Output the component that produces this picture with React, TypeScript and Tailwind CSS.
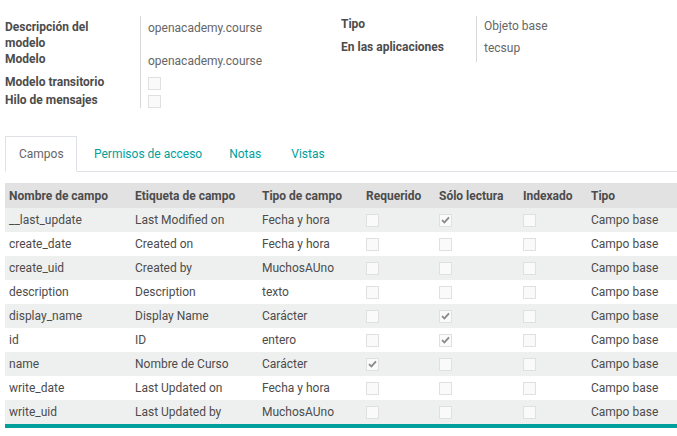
import React from 'react';

type Row = {
  name: string;
  label: string;
  type: string;
  required: boolean;
  readonly: boolean;
};

const ROWS: Row[] = [
  { name: '__last_update', label: 'Last Modified on', type: 'Fecha y hora', required: false, readonly: true },
  { name: 'create_date', label: 'Created on', type: 'Fecha y hora', required: false, readonly: false },
  { name: 'create_uid', label: 'Created by', type: 'MuchosAUno', required: false, readonly: false },
  { name: 'description', label: 'Description', type: 'texto', required: false, readonly: false },
  { name: 'display_name', label: 'Display Name', type: 'Carácter', required: false, readonly: true },
  { name: 'id', label: 'ID', type: 'entero', required: false, readonly: true },
  { name: 'name', label: 'Nombre de Curso', type: 'Carácter', required: true, readonly: false },
  { name: 'write_date', label: 'Last Updated on', type: 'Fecha y hora', required: false, readonly: false },
  { name: 'write_uid', label: 'Last Updated by', type: 'MuchosAUno', required: false, readonly: false },
];

function Check({ checked = false }: { checked?: boolean }) {
  return (
    <span className="flex h-[13px] w-[13px] items-center justify-center border border-[#e0e0e0] bg-[#fafafa]">
      {checked && (
        <svg width="9" height="8" viewBox="0 0 9 8">
          <path d="M1 4.2 L3.4 6.4 L8 1.4" fill="none" stroke="#8a8a8a" strokeWidth="1.8" />
        </svg>
      )}
    </span>
  );
}

export default function App() {
  return (
    <div
      className="h-[436px] w-[677px] overflow-hidden bg-white text-[12px] text-[#4c4c4c]"
      style={{ fontFamily: 'Roboto, "Noto Sans", sans-serif' }}
    >
      {/* cabecera del modelo */}
      <div className="flex pt-[19px]">
        <div className="flex w-[341px] pl-[5px]">
          <div className="w-[135px] pr-[20px] font-bold leading-[16px]">
            <div className="h-[32px]">Descripción del modelo</div>
            <div className="h-[21px]">Modelo</div>
            <div className="h-[18px] pt-[2px]">Modelo transitorio</div>
            <div className="h-[18px] pt-[2px]">Hilo de mensajes</div>
          </div>
          <div className="-mt-[3px] h-[92px] border-l border-[#d8d8d8] pl-[7px] pt-[3px] leading-[16px] text-[#666]">
            <div className="h-[32px] pt-[1px]">openacademy.course</div>
            <div className="h-[21px] pt-[2px]">openacademy.course</div>
            <div className="flex h-[18px] items-center pt-[4px]">
              <Check />
            </div>
            <div className="flex h-[18px] items-center pt-[4px]">
              <Check />
            </div>
          </div>
        </div>
        <div className="flex">
          <div className="-mt-[3px] w-[135px] font-bold leading-[16px]">
            <div className="h-[23px]">Tipo</div>
            <div className="h-[23px]">En las aplicaciones</div>
          </div>
          <div className="-mt-[3px] h-[46px] border-l border-[#d8d8d8] pl-[7px] pt-[2px] leading-[16px] text-[#666]">
            <div className="h-[22px]">Objeto base</div>
            <div className="h-[22px]">tecsup</div>
          </div>
        </div>
      </div>

      {/* pestañas */}
      <div className="ml-[5px] mt-[28px] flex h-[36px] border-b border-[#dee2e6]">
        <div className="-mb-[1px] flex h-[36px] w-[72px] items-center border border-b-white border-[#dee2e6] bg-white pl-[13px] text-[#666]">
          Campos
        </div>
        <div className="ml-[2px] flex items-center pl-[15px] pr-[12px] text-[#00a09d]">Permisos de acceso</div>
        <div className="flex items-center px-[15px] text-[#00a09d]">Notas</div>
        <div className="flex items-center px-[15px] text-[#00a09d]">Vistas</div>
      </div>

      {/* tabla de campos */}
      <div className="ml-[5px] mt-[11px] border-b-[4px] border-[#00a09d]">
        <div className="flex h-[25px] items-center bg-[#e2e2e2] font-bold">
          <div className="w-[126px] pl-[4px]">Nombre de campo</div>
          <div className="w-[127px] pl-[4px]">Etiqueta de campo</div>
          <div className="w-[104px] pl-[4px]">Tipo de campo</div>
          <div className="w-[73px] pl-[4px]">Requerido</div>
          <div className="w-[84px] pl-[4px]">Sólo lectura</div>
          <div className="w-[68px] pl-[4px]">Indexado</div>
          <div className="pl-[4px]">Tipo</div>
        </div>
        {ROWS.map((r, i) => (
          <div
            key={r.name}
            className={`flex h-[24px] items-center ${i % 2 === 0 ? 'bg-[#eef0ef]' : 'bg-white'}`}
          >
            <div className="w-[126px] pl-[4px]">{r.name}</div>
            <div className="w-[127px] pl-[4px]">{r.label}</div>
            <div className="w-[104px] pl-[4px]">{r.type}</div>
            <div className="w-[73px] pl-[4px]">
              <Check checked={r.required} />
            </div>
            <div className="w-[84px] pl-[4px]">
              <Check checked={r.readonly} />
            </div>
            <div className="w-[68px] pl-[4px]">
              <Check />
            </div>
            <div className="pl-[4px]">Campo base</div>
          </div>
        ))}
      </div>
    </div>
  );
}
